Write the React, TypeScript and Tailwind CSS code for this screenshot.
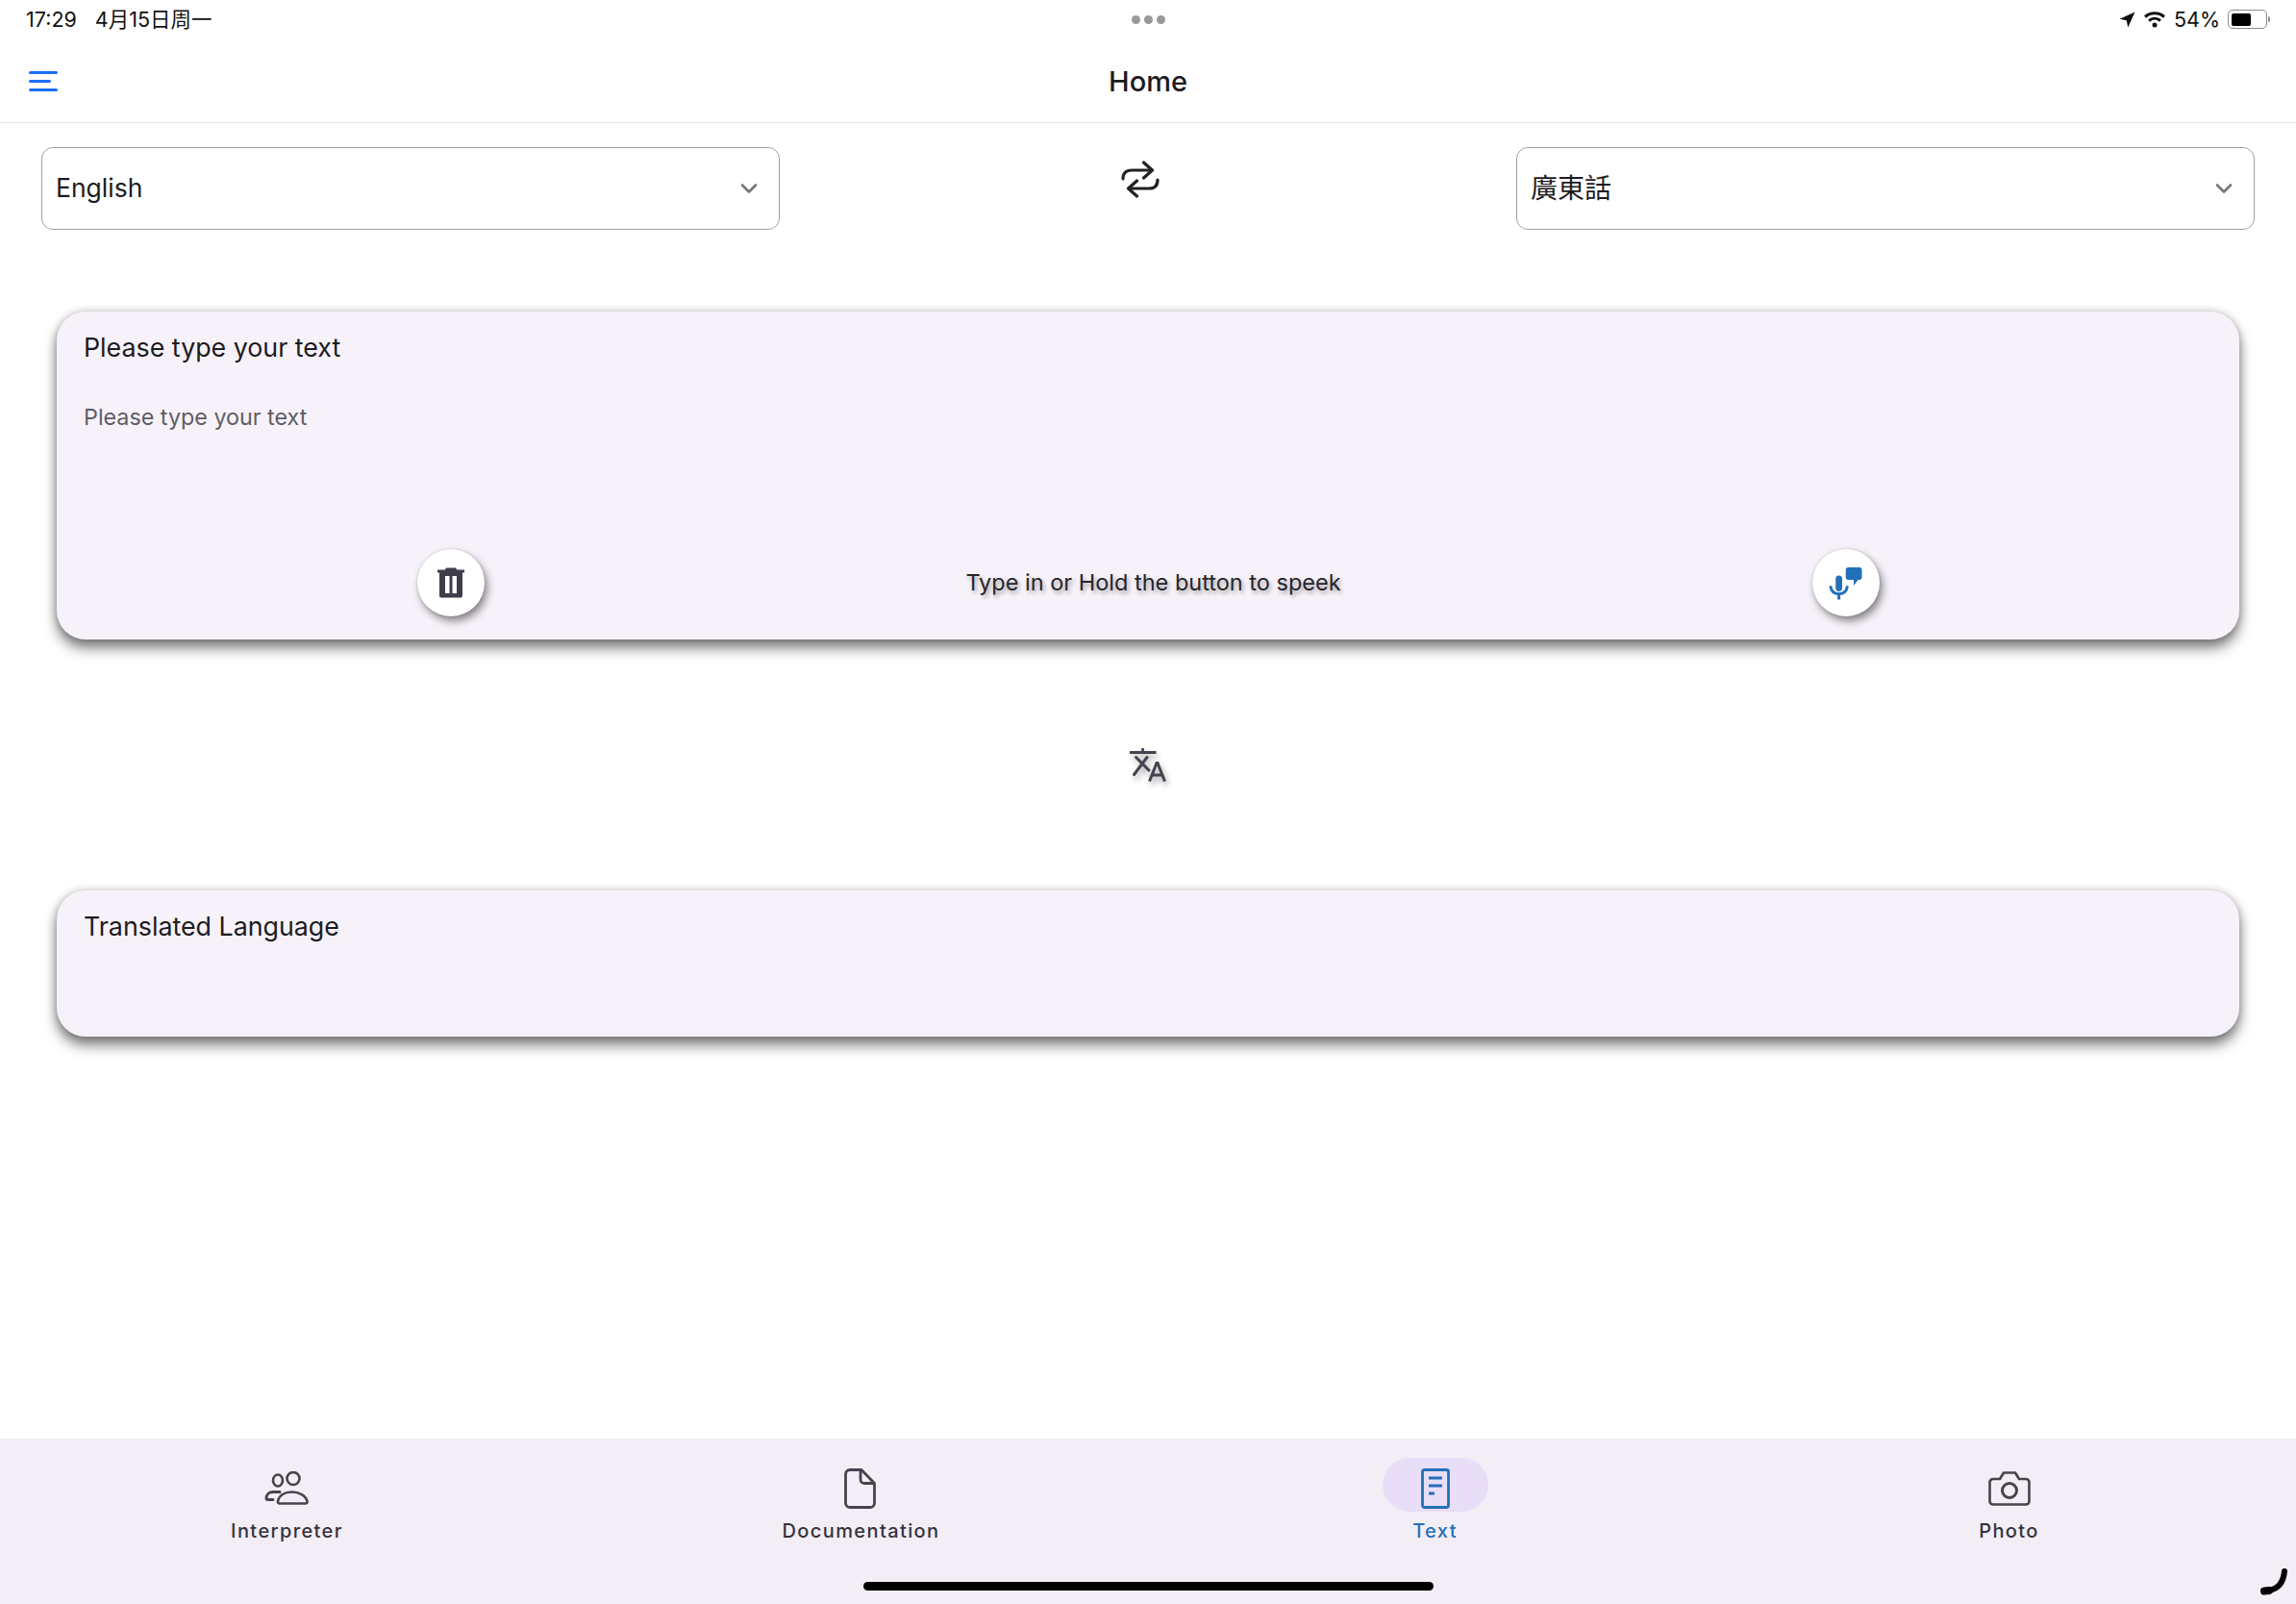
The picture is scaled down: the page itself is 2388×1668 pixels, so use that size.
import { ReactNode } from "react";

const sans = "font-['Inter','Noto_Sans_CJK_SC',sans-serif]";

function Chevron() {
    return (
        <svg width="20" height="14" viewBox="0 0 20 14" fill="none" stroke="#757575" strokeWidth="2.6" strokeLinecap="round" strokeLinejoin="round">
            <path d="M3 3.5l7 7 7-7" />
        </svg>
    );
}

function LangSelect({ label, size }: { label: string; size: string }) {
    return (
        <div className="w-[768px] h-[86px] rounded-[12px] border-[1.5px] border-[#a0a0a0] pl-[14px] pr-[21px] flex items-center justify-between">
            <span className={`${size} text-[#1c1b1f] font-['Inter','Noto_Sans_CJK_TC',sans-serif]`}>{label}</span>
            <Chevron />
        </div>
    );
}

function StatusBar() {
    return (
        <div className={`h-[42px] pb-[2px] flex items-center justify-between pl-[27px] pr-[27px] text-[21.5px] text-[#111] ${sans}`}>
            <div className="flex gap-[19px] w-[300px]">
                <span>17:29</span>
                <span>4月15日周一</span>
            </div>
            <div className="flex gap-[4px]">
                <span className="w-[9px] h-[9px] rounded-full bg-[#999]" />
                <span className="w-[9px] h-[9px] rounded-full bg-[#999]" />
                <span className="w-[9px] h-[9px] rounded-full bg-[#999]" />
            </div>
            <div className="flex items-center justify-end gap-[8px] w-[300px]">
                <svg width="17" height="17" viewBox="0 0 16 16" fill="#111">
                    <path d="M15.5 0.5L0.5 7.2l6.8 1.4 1.4 6.9z" />
                </svg>
                <svg width="24" height="18" viewBox="0 0 24 18" fill="none" stroke="#111" strokeWidth="3">
                    <path d="M2 6.5c5.8-5 14.2-5 20 0" />
                    <path d="M6 10.5c3.6-3 8.4-3 12 0" />
                    <circle cx="12" cy="15" r="2.5" fill="#111" stroke="none" />
                </svg>
                <span>54%</span>
                <div className="flex items-center gap-[1px]">
                    <div className="w-[41px] h-[20px] rounded-[5px] border-[1.5px] border-[#8a8a8a] p-[2.5px]">
                        <div className="w-[20px] h-full rounded-[2px] bg-black" />
                    </div>
                    <div className="w-[2px] h-[6px] rounded-r-full bg-[#8a8a8a]" />
                </div>
            </div>
        </div>
    );
}

function AppBar() {
    return (
        <div className="relative h-[86px] border-b-[1.5px] border-[#e6e6e6] flex items-center justify-center">
            <div className="absolute left-[30px] top-[32px] flex flex-col gap-[6px]">
                <div className="w-[30px] h-[3px] rounded-full bg-[#1a6ef5]" />
                <div className="w-[23px] h-[3px] rounded-full bg-[#1a6ef5]" />
                <div className="w-[30px] h-[3px] rounded-full bg-[#1a6ef5]" />
            </div>
            <span className={`text-[29px] font-medium text-[#1c1b1f] ${sans}`}>Home</span>
        </div>
    );
}

function SwapIcon() {
    return (
        <svg width="42" height="42" viewBox="0 0 42 42" fill="none" stroke="#222" strokeWidth="3.2" strokeLinecap="round" strokeLinejoin="round">
            <path d="M3 20c0-6 3.5-9 9-9h20" />
            <path d="M24.5 3l9 8-9 8" />
            <path d="M39 21c0 6-3.5 9-9 9H10" />
            <path d="M17.5 22l-9 8 9 8" />
        </svg>
    );
}

function TrashIcon() {
    return (
        <svg width="28" height="32" viewBox="0 0 28 32" fill="#3f3d4a">
            <path d="M9 0.5h10l1.2 2H28v3H0v-3h7.8z" />
            <path fillRule="evenodd" d="M2 5h24v24.5a2 2 0 0 1-2 2H4a2 2 0 0 1-2-2zM8 9v18h4.5V9zM15.5 9v18H20V9z" />
        </svg>
    );
}

function MicChatIcon() {
    return (
        <svg width="35" height="34" viewBox="0 0 35 34" fill="none" className="mt-[1px]">
            <rect x="7.2" y="8.5" width="6.8" height="16.5" rx="3.4" fill="#2470b8" />
            <path d="M2 20.5c.8 4.800 4.300 7 8.600 7s7.800-2.200 8.600-7" stroke="#2470b8" strokeWidth="3" strokeLinecap="round" />
            <path d="M10.600 27v6.500" stroke="#2470b8" strokeWidth="3" />
            <path d="M17.700 2.500C17.700 1.100 18.800 0 20.200 0h11.800c1.400 0 2.500 1.100 2.500 2.500v8c0 1.400-1.100 2.500-2.500 2.500h-1.500L26 19v-6h-5.800c-1.400 0-2.500-1.100-2.500-2.500z" fill="#2470b8" />
        </svg>
    );
}

function TranslateIcon() {
    return (
        <svg width="38" height="35" viewBox="0 0 38 35" fill="none" stroke="#45434f" strokeWidth="3" className="drop-shadow-[2px_4px_3px_rgba(0,0,0,0.35)]">
            <path d="M0 4.500h27.500M13.500 0v4.500" strokeWidth="2.800" />
            <path d="M6.500 9.500L20 23" strokeLinecap="round" />
            <path d="M18 9.500L4.500 27.500" strokeLinecap="round" />
            <path d="M20.500 34.500L28 15.500h1L36.500 34.500M23 28h11" />
        </svg>
    );
}

function RoundButton({ children }: { children: ReactNode }) {
    return (
        <div className="w-[70px] h-[70px] rounded-full bg-white flex items-center justify-center shadow-[3px_5px_8px_rgba(0,0,0,0.45),0_0_3px_rgba(0,0,0,0.15)]">
            {children}
        </div>
    );
}

const cardShadow = "shadow-[0_9px_14px_rgba(0,0,0,0.5),0_0_8px_rgba(0,0,0,0.22)]";

function InputCard() {
    return (
        <section className={`mx-[59px] h-[341px] rounded-[30px] bg-[#f7f2f9] flex flex-col ${cardShadow} ${sans}`}>
            <h2 className="pl-[28px] pt-[19px] text-[26.8px] leading-[36px] text-[#1c1b1f]">Please type your text</h2>
            <p className="pl-[28px] pt-[40px] text-[23.3px] leading-[30px] text-[#5f5d66]">Please type your text</p>
            <div className="mt-auto mb-[24px] pl-[375px] pr-[374px] flex items-center justify-between">
                <RoundButton><TrashIcon /></RoundButton>
                <span className="ml-[10px] text-[23.5px] text-[#26252b] [text-shadow:2px_3px_4px_rgba(0,0,0,0.35)]">Type in or Hold the button to speek</span>
                <RoundButton><MicChatIcon /></RoundButton>
            </div>
        </section>
    );
}

function PeopleIcon() {
    return (
        <svg width="46" height="36" viewBox="0 0 46 36" fill="none" stroke="#45434f" strokeWidth="2.6" strokeLinecap="round" className="-ml-[2px]">
            <ellipse cx="14" cy="9.500" rx="5" ry="6" />
            <ellipse cx="30" cy="7.500" rx="6.500" ry="6.500" />
            <path d="M16 21.500H9c-4 0-7 2.500-7 6.500 0 1 .8 1.500 2 1.500h5" strokeWidth="3" />
            <path d="M16 33.500c-1.500 0-2.300-1-2-2.300 1.300-6 7-9.700 14.500-9.700s14.500 3.700 16 9.700c.3 1.300-.5 2.300-2 2.300z" />
        </svg>
    );
}

function FileIcon() {
    return (
        <svg width="34" height="42" viewBox="0 0 34 42" fill="none" stroke="#45434f" strokeWidth="2.8" strokeLinejoin="round" className="-ml-[3px]">
            <path d="M7 1.500h12l13.500 14V36a4.500 4.500 0 0 1-4.500 4.500H7A4.500 4.500 0 0 1 2.500 36V6A4.500 4.500 0 0 1 7 1.500z" />
            <path d="M18 2v9.500a4 4 0 0 0 4 4h10" />
        </svg>
    );
}

function TextDocIcon() {
    return (
        <svg width="30" height="42" viewBox="0 0 30 42" fill="none" stroke="#2470b8" strokeWidth="2.8">
            <rect x="1.500" y="1.500" width="27" height="39" rx="2" />
            <path d="M8 10h14M8 18h14M8 26h6" />
        </svg>
    );
}

function CameraIcon() {
    return (
        <svg width="44" height="36" viewBox="0 0 44 36" fill="none" stroke="#45434f" strokeWidth="2.6" strokeLinejoin="round">
            <path d="M5 8h7l4-6.500h12l4 6.500h7a3.500 3.500 0 0 1 3.500 3.500V31a3.500 3.500 0 0 1-3.500 3.500H5A3.500 3.500 0 0 1 1.500 31V11.500A3.500 3.500 0 0 1 5 8z" />
            <circle cx="22" cy="20" r="7.500" strokeWidth="3" />
        </svg>
    );
}

function NavItem({ label, icon, active }: { label: string; icon: ReactNode; active?: boolean }) {
    return (
        <div className="flex flex-col items-center">
            <div className={`w-[110px] h-[56px] rounded-full flex items-center justify-center ${active ? "bg-[#e8def8]" : ""}`}>
                <div className="mt-[8px] flex items-center justify-center">{icon}</div>
            </div>
            <span className={`mt-[8px] text-[20px] leading-[24px] font-medium tracking-[1.4px] ${active ? "text-[#2470b8]" : "text-[#34333c]"}`}>{label}</span>
        </div>
    );
}

function BottomNav() {
    return (
        <nav className={`relative h-[172px] bg-[#f3edf6] grid grid-cols-4 pt-[20px] ${sans}`}>
            <NavItem label="Interpreter" icon={<PeopleIcon />} />
            <NavItem label="Documentation" icon={<FileIcon />} />
            <NavItem label="Text" icon={<TextDocIcon />} active />
            <NavItem label="Photo" icon={<CameraIcon />} />
            <div className="absolute left-[898px] top-[149px] w-[593px] h-[9px] rounded-full bg-black" />
            <svg className="absolute left-[2346px] top-[133px]" width="36" height="34" viewBox="0 0 36 34" fill="none" stroke="#000" strokeLinecap="round">
                <path d="M30 5c-1 11-6 18-16 20" strokeWidth="6" />
                <path d="M14 25l-5 .5" strokeWidth="8" />
            </svg>
        </nav>
    );
}

export default function App() {
    return (
        <div className="w-[2388px] h-[1668px] bg-white flex flex-col overflow-hidden">
            <StatusBar />
            <AppBar />
            <div className="flex-1 flex flex-col">
                <div className="pt-[25px] px-[43px] flex items-start justify-between">
                    <LangSelect label="English" size="text-[26.5px]" />
                    <div className="mt-[13px] mr-[16px]"><SwapIcon /></div>
                    <LangSelect label="廣東話" size="text-[28px]" />
                </div>
                <div className="mt-[85px]">
                    <InputCard />
                </div>
                <div className="h-[261px] flex items-center justify-center">
                    <TranslateIcon />
                </div>
                <section className={`mx-[59px] h-[152px] rounded-[30px] bg-[#f7f2f9] ${cardShadow} ${sans}`}>
                    <h2 className="pl-[28px] pt-[19px] text-[26.8px] leading-[36px] text-[#1c1b1f]">Translated Language</h2>
                </section>
            </div>
            <BottomNav />
        </div>
    );
}
